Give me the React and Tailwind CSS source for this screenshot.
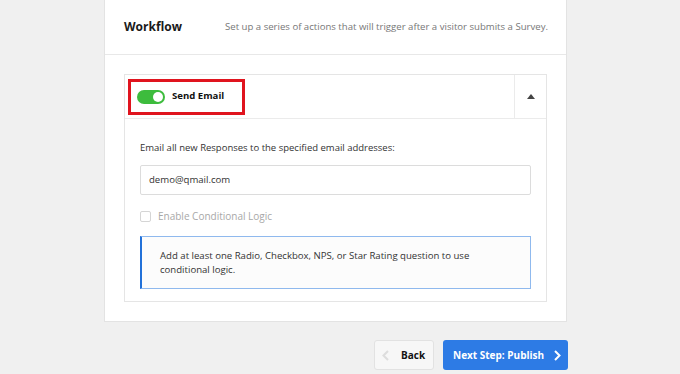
export default function App() {
  const font = { fontFamily: '"Open Sans", "Noto Sans", sans-serif' };
  return (
    <div className="w-[680px] h-[374px] bg-[#f0f0f0] overflow-hidden" style={font}>
      <div className="ml-[104px] w-[463px] h-[322px] bg-white border border-[#e3e3e3] border-t-0">
        <div className="h-[55px] border-b border-[#e8e8e8] flex items-center justify-between pl-[19px] pr-[18px]">
          <span className="text-[12px] font-bold text-[#1a1a1a]">Workflow</span>
          <span className="text-[9.6px] text-[#777]">Set up a series of actions that will trigger after a visitor submits a Survey.</span>
        </div>
        <div className="mx-[19px] mt-[19px] h-[228px] border border-[#e5e5e5] flex flex-col">
          <div className="h-[44px] flex border-b border-[#ebebeb]">
            <div className="flex-1 flex items-center pl-[3px]">
              <div className="w-[117px] h-[36px] border-[3px] border-[#e0141e] flex items-center pl-[6px] gap-[7px]">
                <div className="w-[28px] h-[14px] rounded-full bg-[#3dbc3d] relative">
                  <div className="absolute right-[2px] top-[2px] w-[10px] h-[10px] rounded-full bg-white"></div>
                </div>
                <span className="text-[9.6px] font-bold text-[#111]">Send Email</span>
              </div>
            </div>
            <div className="w-[32px] border-l border-[#ebebeb] flex items-center justify-center">
              <svg width="8" height="5" viewBox="0 0 8 5"><path d="M0 5 L4 0 L8 5 Z" fill="#444" /></svg>
            </div>
          </div>
          <div className="px-[15px] pt-[22px]">
            <div className="text-[9.5px] text-[#333] leading-[14px]">Email all new Responses to the specified email addresses:</div>
            <div className="mt-[10px] h-[30px] border border-[#dcdcdc] rounded-[2px] flex items-center pl-[8px] text-[9.6px] text-[#333]">demo@qmail.com</div>
            <div className="mt-[14px] h-[15px] flex items-center gap-[7px]">
              <div className="w-[11px] h-[11px] border border-[#d5d5d5] rounded-[2px] bg-white"></div>
              <span className="text-[10px] text-[#a8a8a8]">Enable Conditional Logic</span>
            </div>
            <div className="mt-[12px] h-[53px] border border-[#8fb9ee] border-l-2 border-l-[#2271d9] bg-[#fcfcfc] pl-[18px] flex flex-col justify-center">
              <div className="text-[9.6px] text-[#333] leading-[14px]">Add at least one Radio, Checkbox, NPS, or Star Rating question to use<br />conditional logic.</div>
            </div>
          </div>
        </div>
      </div>
      <div className="ml-[374px] mt-[18px] flex gap-[9px]">
        <div className="w-[60px] h-[30px] bg-[#f7f7f7] border border-[#e2e2e2] rounded-[3px] flex items-center pl-[7px] gap-[12px]">
          <svg width="7" height="11" viewBox="0 0 7 11"><path d="M6 1 L1.5 5.5 L6 10" stroke="#ddd" strokeWidth="2" fill="none" /></svg>
          <span className="text-[10px] font-bold text-[#111]">Back</span>
        </div>
        <div className="w-[125px] h-[30px] bg-[#2d7be5] rounded-[3px] flex items-center pl-[10px] gap-[10px]">
          <span className="text-[10px] font-bold text-white">Next Step: Publish</span>
          <svg width="7" height="11" viewBox="0 0 7 11"><path d="M1 1 L5.5 5.5 L1 10" stroke="#fff" strokeWidth="2" fill="none" /></svg>
        </div>
      </div>
    </div>
  );
}
